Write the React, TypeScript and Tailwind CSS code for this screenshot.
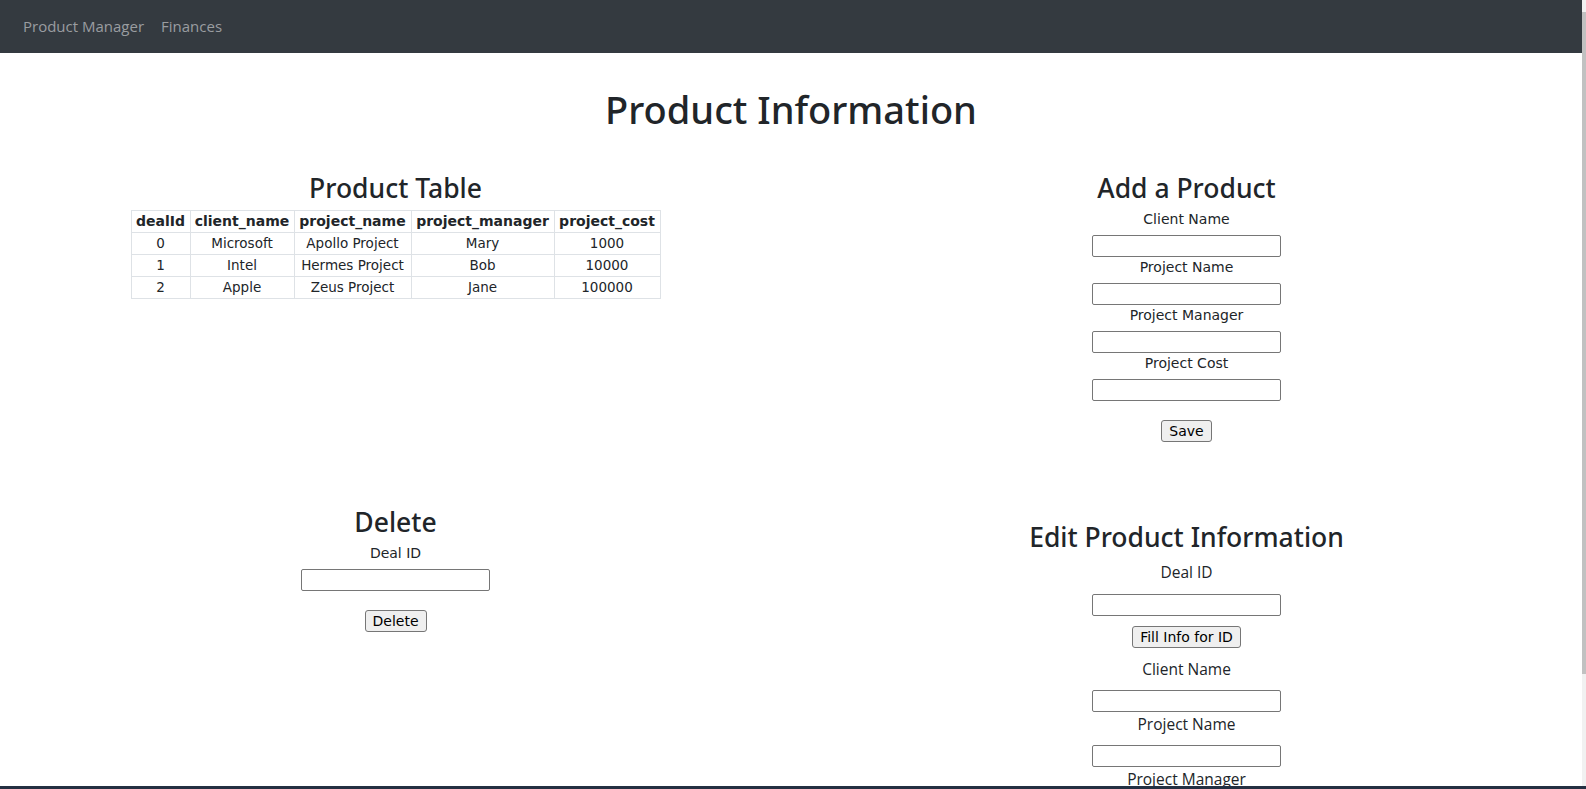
import React from 'react';

const verdana = { fontFamily: '"DejaVu Sans", Verdana, sans-serif' };

const rows = [
  { dealId: 0, client: 'Microsoft', project: 'Apollo Project', manager: 'Mary', cost: 1000 },
  { dealId: 1, client: 'Intel', project: 'Hermes Project', manager: 'Bob', cost: 10000 },
  { dealId: 2, client: 'Apple', project: 'Zeus Project', manager: 'Jane', cost: 100000 },
];

const Heading = ({ children }: { children: React.ReactNode }) => (
  <h2 className="font-['Noto_Sans',sans-serif] text-[26.5px] leading-[36px] font-medium text-[#212529] mb-[3px]">
    {children}
  </h2>
);

const Field = () => (
  <input className="block w-[189px] h-[22px] border border-[#767676] rounded-[2px] bg-white" />
);

const Btn = ({ children, className = '' }: { children: React.ReactNode; className?: string }) => (
  <button
    className={`h-[22px] px-[7px] text-[14px] leading-[20px] text-black bg-[#efefef] border border-[#767676] rounded-[3px] font-['DejaVu_Sans',sans-serif] ${className}`}
  >
    {children}
  </button>
);

const SmallLabel = ({ children }: { children: React.ReactNode }) => (
  <div className="font-['DejaVu_Sans',sans-serif] text-[14px] leading-[20px] text-[#212529] mb-[6px]">{children}</div>
);

const ProductTable = () => (
  <table
    className="table-fixed w-[529px] border-collapse text-[13.5px] text-[#212529] text-center"
    style={verdana}
  >
    <thead>
      <tr className="h-[22px]">
        <th className="w-[59px] border border-[#dee2e6] p-0 font-bold text-[14px]">dealId</th>
        <th className="w-[104px] border border-[#dee2e6] p-0 font-bold text-[14px]">client_name</th>
        <th className="w-[117px] border border-[#dee2e6] p-0 font-bold text-[14px]">project_name</th>
        <th className="w-[143px] border border-[#dee2e6] p-0 font-bold text-[14px]">project_manager</th>
        <th className="w-[106px] border border-[#dee2e6] p-0 font-bold text-[14px]">project_cost</th>
      </tr>
    </thead>
    <tbody>
      {rows.map((r) => (
        <tr key={r.dealId} className="h-[22px]">
          <td className="border border-[#dee2e6] p-0">{r.dealId}</td>
          <td className="border border-[#dee2e6] p-0">{r.client}</td>
          <td className="border border-[#dee2e6] p-0">{r.project}</td>
          <td className="border border-[#dee2e6] p-0">{r.manager}</td>
          <td className="border border-[#dee2e6] p-0">{r.cost}</td>
        </tr>
      ))}
    </tbody>
  </table>
);

const App = () => {
  return (
    <div className="h-[789px] w-[1586px] overflow-hidden flex flex-col bg-white font-['Open_Sans',sans-serif]">
      <div className="flex flex-1 min-h-0">
        <div className="flex-1 min-w-0 overflow-hidden">
          <nav className="h-[53px] bg-[#343a40] flex items-center gap-[17px] px-[23px] text-[15px] text-[#9a9da0]">
            <span>Product Manager</span>
            <span>Finances</span>
          </nav>

          <h1 className="mt-[33px] text-center font-['Noto_Sans',sans-serif] text-[38px] leading-[46px] font-medium text-[#212529]">
            Product Information
          </h1>

          <div className="grid grid-cols-2 mt-[38px] text-center">
            <div className="flex flex-col items-center">
              <Heading>Product Table</Heading>
              <div className="mt-[1px]">
                <ProductTable />
              </div>
            </div>
            <div className="flex flex-col items-center">
              <Heading>Add a Product</Heading>
              <SmallLabel>Client Name</SmallLabel>
              <Field />
              <SmallLabel>Project Name</SmallLabel>
              <Field />
              <SmallLabel>Project Manager</SmallLabel>
              <Field />
              <SmallLabel>Project Cost</SmallLabel>
              <Field />
              <Btn className="mt-[19px]">Save</Btn>
            </div>
          </div>

          <div className="grid grid-cols-2 mt-[62px] text-center">
            <div className="flex flex-col items-center">
              <Heading>Delete</Heading>
              <SmallLabel>Deal ID</SmallLabel>
              <Field />
              <Btn className="mt-[19px]">Delete</Btn>
            </div>
            <div className="flex flex-col items-center pt-[15px]">
              <h2 className="font-['Noto_Sans',sans-serif] text-[26.5px] leading-[36px] font-medium text-[#212529] mb-[5px]">
                Edit Product Information
              </h2>
              <div className="text-[15.5px] leading-[24px] text-[#212529]">Deal ID</div>
              <div className="mt-[10px]">
                <Field />
              </div>
              <Btn className="mt-[10px]">Fill Info for ID</Btn>
              <div className="mt-[9px] text-[15.5px] leading-[24px] text-[#212529]">Client Name</div>
              <div className="mt-[9px]">
                <Field />
              </div>
              <div className="text-[15.5px] leading-[24px] text-[#212529]">Project Name</div>
              <div className="mt-[9px]">
                <Field />
              </div>
              <div className="text-[15.5px] leading-[24px] text-[#212529]">Project Manager</div>
            </div>
          </div>
        </div>
        <div className="w-[4px] bg-[#f1f1f1] pt-[12px]">
          <div className="h-[662px] bg-[#c1c1c1]" />
        </div>
      </div>
      <div className="h-[3px] bg-[#243042]" />
    </div>
  );
};

export default App;
